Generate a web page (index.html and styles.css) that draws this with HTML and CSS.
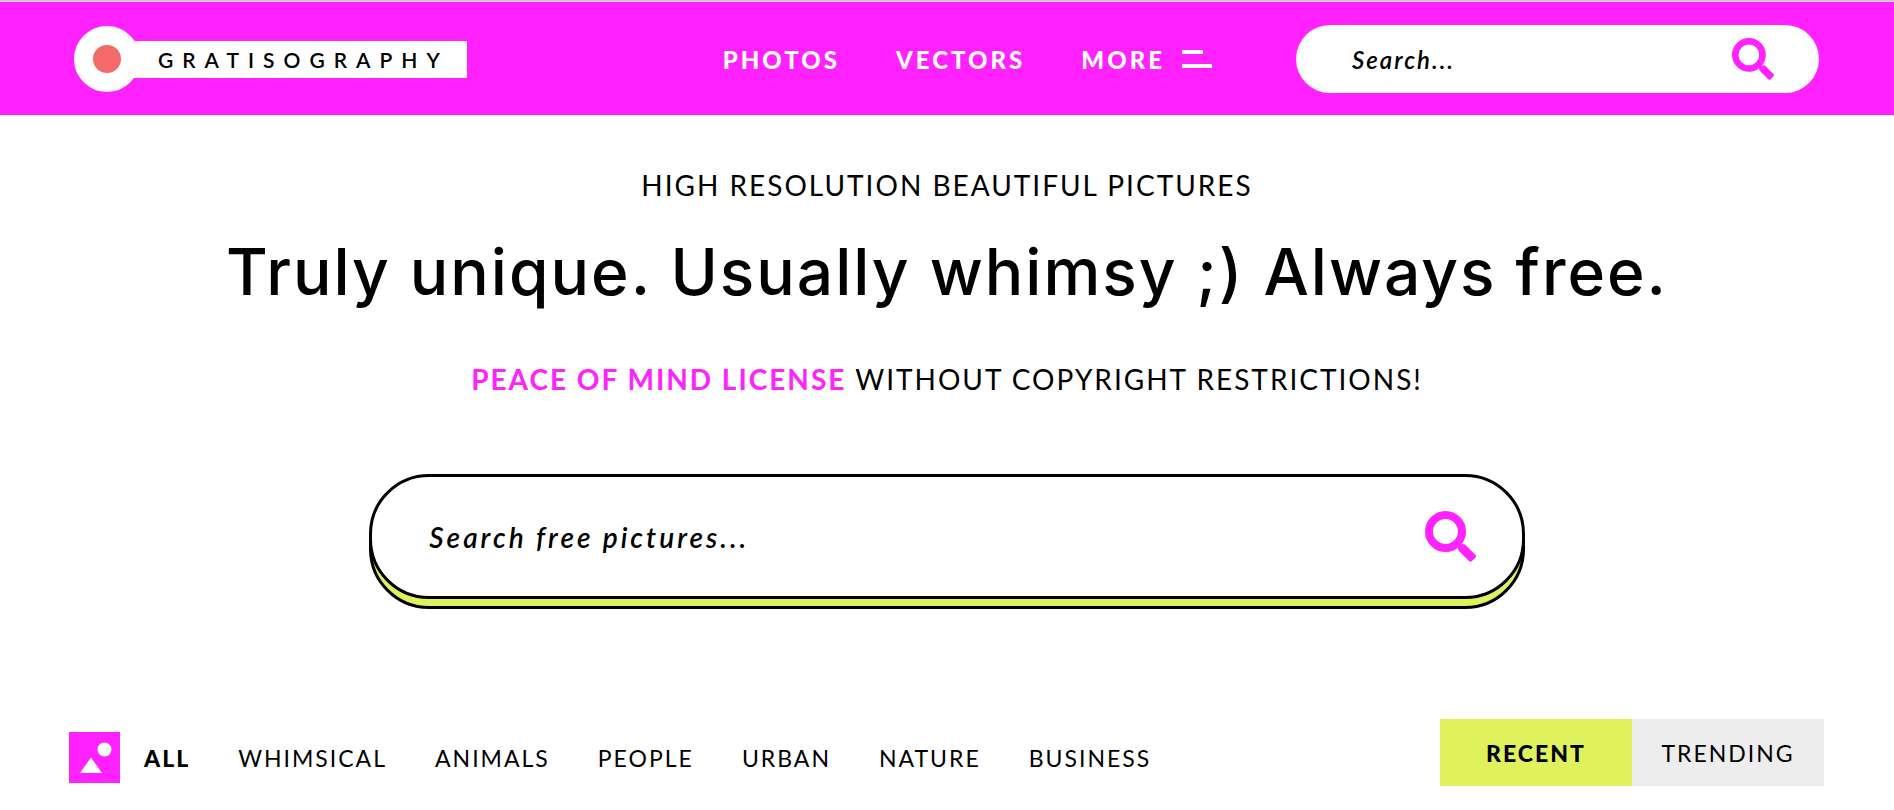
FILE: index.html
```
<!DOCTYPE html>
<html lang="en">
	<head>
		<meta charset="UTF-8">
		<title>Gratisography</title>
		<link rel="stylesheet" href="styles.css">
	</head>
	<body>
		<header class="header">
			<a class="logo" href="#">
				<span class="logo-circle"></span>
				<span class="logo-text">GRATISOGRAPHY</span>
			</a>
			<nav class="nav">
				<a href="#">PHOTOS</a>
				<a href="#">VECTORS</a>
				<button type="button" class="more">
					MORE
					<svg width="30" height="18" viewBox="0 0 30 18"><path d="M0 0h21v4H0zM0 14h30v4H0z" fill="currentColor"/></svg>
				</button>
			</nav>
			<form class="search search-small">
				<input type="text" placeholder="Search..." aria-label="Search">
				<button type="submit" aria-label="Submit search">
					<svg width="42" height="42" viewBox="0 0 51 51"><circle cx="20.5" cy="20.5" r="16.5" fill="none" stroke="currentColor" stroke-width="8"/><path d="M33 35.500Q35 33 37.500 33L40 33.500L50.500 44Q51.500 45.500 50.500 46.500L47 50Q45.500 51.500 44 50L34 40Q32.500 38 33 35.500Z" fill="currentColor"/></svg>
				</button>
			</form>
		</header>

		<section class="hero">
			<p class="tagline">HIGH RESOLUTION BEAUTIFUL PICTURES</p>
			<h1>Truly unique. Usually whimsy ;) Always free.</h1>
			<p class="tagline"><a href="#">PEACE OF MIND LICENSE</a> WITHOUT COPYRIGHT RESTRICTIONS!</p>
			<form class="search search-big">
				<input type="text" placeholder="Search free pictures..." aria-label="Search free pictures">
				<button type="submit" aria-label="Submit search">
					<svg width="51" height="51" viewBox="0 0 51 51"><circle cx="20.5" cy="20.5" r="16.5" fill="none" stroke="currentColor" stroke-width="8"/><path d="M33 35.500Q35 33 37.500 33L40 33.500L50.500 44Q51.500 45.500 50.500 46.500L47 50Q45.500 51.500 44 50L34 40Q32.500 38 33 35.500Z" fill="currentColor"/></svg>
				</button>
			</form>
		</section>

		<section class="filters">
			<nav class="categories">
				<svg width="51" height="51" viewBox="0 0 51 51"><path d="M0 0h51v51H0z" fill="#ff22ff"/><circle cx="35.500" cy="17.500" r="7" fill="#fff"/><path d="M22 25.500L33 41H11z" fill="#fff"/></svg>
				<ul>
					<li><a class="current" href="#">ALL</a></li>
					<li><a href="#">WHIMSICAL</a></li>
					<li><a href="#">ANIMALS</a></li>
					<li><a href="#">PEOPLE</a></li>
					<li><a href="#">URBAN</a></li>
					<li><a href="#">NATURE</a></li>
					<li><a href="#">BUSINESS</a></li>
				</ul>
			</nav>
			<div class="tabs">
				<button type="button" class="current">RECENT</button>
				<button type="button">TRENDING</button>
			</div>
		</section>
	</body>
</html>
```
FILE: styles.css
```
*{
	margin: 0;
	padding: 0;
	box-sizing: border-box;
}
body{
	font-family: Lato, "Open Sans", sans-serif;
	font-size: 23px;
	letter-spacing: 2px;
	color: #000;
	background: #fff;
}
a{
	color: inherit;
	text-decoration: none;
}
button{
	font: inherit;
	letter-spacing: inherit;
	color: inherit;
	border: 0;
	background: none;
	cursor: pointer;
}
svg{
	display: block;
	flex: none;
}

/* header */
.header{
	display: flex;
	align-items: center;
	padding: 23px 75px 22px 74px;
	border-top: 2px solid #ccc;
	background: #ff22ff;
}
.logo{
	display: flex;
	align-items: center;
}
.logo-circle{
	width: 66px;
	height: 66px;
	border: 19px solid #fff;
	border-radius: 50%;
	background: #f26a6a;
}
.logo-text{
	margin-left: -8px;
	padding: 0 18px 0 26px;
	background: #fff;
	font-size: 21px;
	font-weight: 600;
	line-height: 37px;
	letter-spacing: 9px;
}
.nav{
	display: flex;
	align-items: center;
	gap: 56px;
	margin-left: auto;
	color: #fff;
	font-size: 24px;
	font-weight: 900;
	letter-spacing: 3px;
}
.more{
	display: flex;
	align-items: center;
	gap: 17px;
}

/* search boxes */
.search{
	display: flex;
	align-items: center;
	background: #fff;
}
.search input{
	flex: 1;
	min-width: 0;
	border: 0;
	outline: 0;
	background: none;
	font-family: inherit;
	font-size: inherit;
	font-style: italic;
	font-weight: 600;
	letter-spacing: inherit;
}
.search input::placeholder{
	color: #000;
}
.search button{
	color: #ff22ff;
}
.search-small{
	width: 523px;
	height: 68px;
	margin-left: 84px;
	padding: 0 45px 0 56px;
	border-radius: 34px;
	font-size: 24px;
}
.search-big{
	position: relative;
	width: 61%;
	height: 125px;
	margin: 77px auto 0;
	padding: 0 46px 0 57px;
	border: 3px solid #000;
	border-radius: 60px;
	font-size: 28px;
	letter-spacing: 3px;
}
/* green pill under the big search box */
.search-big::before{
	content: "";
	position: absolute;
	z-index: -1;
	inset: 7px -3px -13px;
	border: 3px solid #000;
	border-radius: 60px;
	background: #dff25e;
}

/* hero */
.hero{
	padding-top: 52px;
	text-align: center;
}
.tagline{
	font-size: 28px;
	line-height: 36px;
}
.tagline a{
	color: #ff22ff;
	font-weight: 700;
}
h1{
	margin: 24px 0 44px;
	font-family: Inter, sans-serif;
	font-size: 64px;
	font-weight: 500;
	line-height: 90px;
	letter-spacing: 2px;
}

/* category bar */
.filters{
	display: flex;
	justify-content: space-between;
	align-items: flex-start;
	padding: 120px 70px 25px 69px;
}
.categories{
	display: flex;
	align-items: center;
	margin-top: 13px;
}
.categories ul{
	display: flex;
	gap: 48px;
	margin-left: 24px;
	list-style: none;
}
.current{
	font-weight: 900;
}
.tabs{
	display: flex;
}
.tabs button{
	width: 192px;
	height: 67px;
	background: #ededed;
}
.tabs .current{
	background: #dff25e;
}
```
